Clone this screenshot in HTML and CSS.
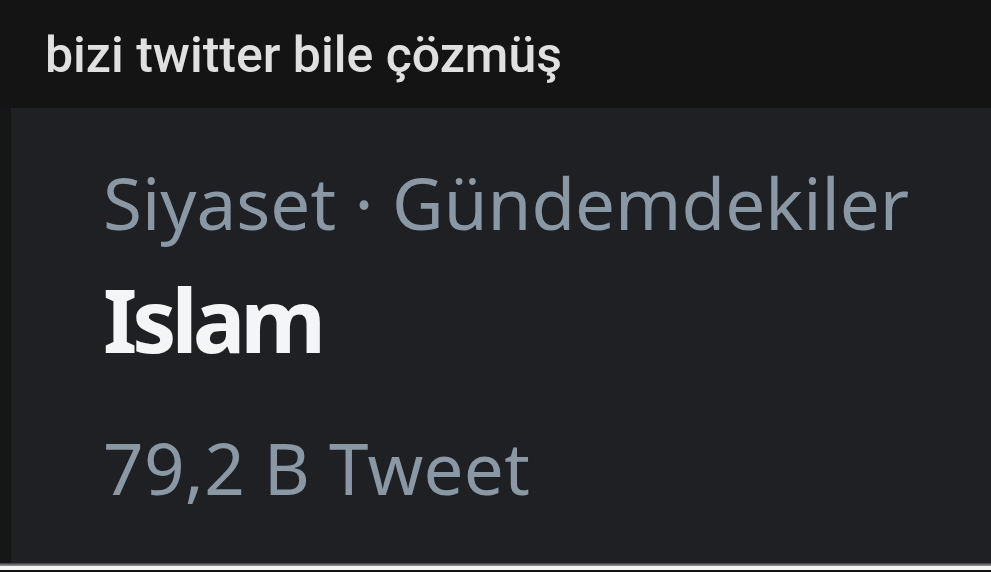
FILE: index.html
```html
<!DOCTYPE html>
<html lang="tr">
<head>
<meta charset="utf-8">
<title>bizi twitter bile çözmüş</title>
<link rel="stylesheet" href="styles.css">
</head>
<body>
<div class="page">
  <header class="titlebar">
    <h1 class="title">bizi twitter bile çözmüş</h1>
  </header>
  <main class="shot">
    <div class="strip"></div>
    <section class="trend">
      <div class="meta">Siyaset · Gündemdekiler</div>
      <div class="topic">Islam</div>
      <div class="count">79,2 B Tweet</div>
    </section>
  </main>
  <footer class="edge">
    <div class="edge-grey"></div>
    <div class="edge-white"></div>
    <div class="edge-dark"></div>
  </footer>
</div>
</body>
</html>
```

FILE: styles.css
```css
html, body {
  margin: 0;
  padding: 0;
  background: #141414;
}
.page {
  width: 991px;
  height: 572px;
  display: flex;
  flex-direction: column;
  overflow: hidden;
}
.titlebar {
  height: 108px;
  background: #141414;
  flex: none;
  box-sizing: border-box;
  padding-left: 45px;
}
.title {
  margin: 0;
  font-family: Roboto, "Liberation Sans", sans-serif;
  font-weight: 500;
  font-size: 50px;
  line-height: 50px;
  padding-top: 30px;
  color: #e0e0e0;
}
.shot {
  flex: 1;
  display: flex;
  background: #1f2023;
}
.strip {
  width: 11px;
  background: #161617;
  flex: none;
}
.trend {
  flex: 1;
  padding-left: 92px;
  font-family: "Noto Sans", "Open Sans", sans-serif;
  display: flex;
  flex-direction: column;
}
.meta {
  color: #8a97a4;
  font-size: 71px;
  line-height: 71px;
  margin-top: 59px;
}
.topic {
  color: #f4f5f6;
  font-weight: 700;
  font-size: 88px;
  line-height: 88px;
  letter-spacing: -5px;
  margin-top: 37px;
}
.count {
  color: #8a97a4;
  font-size: 71px;
  line-height: 71px;
  margin-top: 69px;
  letter-spacing: 0.3px;
}
.edge {
  flex: none;
  display: flex;
  flex-direction: column;
}
.edge-grey {
  height: 3px;
  background: linear-gradient(#3a3a3a, #9a9a9a);
}
.edge-white {
  height: 4px;
  background: #f4f4f4;
}
.edge-dark {
  height: 2px;
  background: #111;
}
```
